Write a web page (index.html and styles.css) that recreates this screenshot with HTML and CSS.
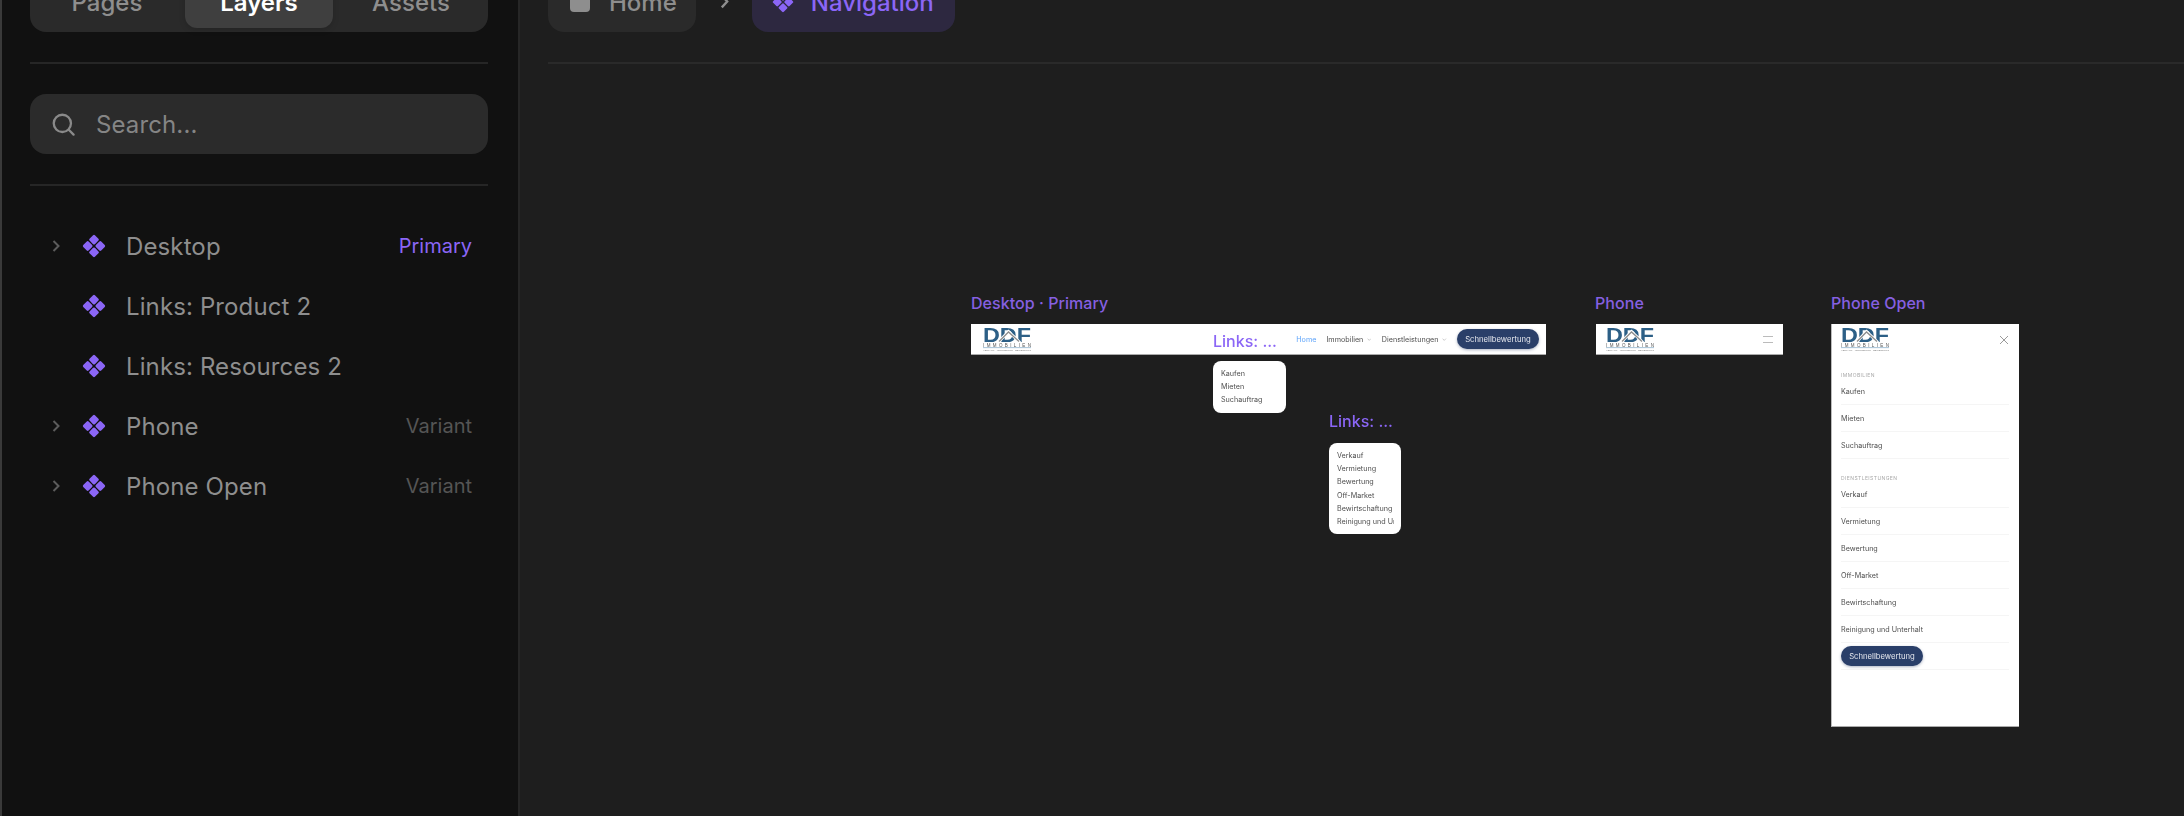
FILE: index.html
```html
<!DOCTYPE html>
<html lang="de">
<head>
<meta charset="utf-8">
<title>Navigation</title>
<link rel="stylesheet" href="styles.css">
</head>
<body>
<svg class="defs" width="0" height="0" aria-hidden="true">
  <symbol id="cmp" viewBox="0 0 24 24">
    <g fill="#8b66f6">
      <rect x="8.200" y="1.900" width="7.600" height="7.600" rx="1.300" transform="rotate(45 12 5.700)"/>
      <rect x="1.900" y="8.200" width="7.600" height="7.600" rx="1.300" transform="rotate(45 5.700 12)"/>
      <rect x="14.500" y="8.200" width="7.600" height="7.600" rx="1.300" transform="rotate(45 18.300 12)"/>
      <rect x="8.200" y="14.500" width="7.600" height="7.600" rx="1.300" transform="rotate(45 12 18.300)"/>
    </g>
  </symbol>
  <symbol id="logo" viewBox="0 0 48 25">
    <text x="0" y="15" font-family="Liberation Sans" font-weight="700" font-size="20" textLength="48" lengthAdjust="spacingAndGlyphs" fill="#2c5f86">DDF</text>
    <path d="M15 15.500 25.500 4.500 37 15.500" fill="none" stroke="#fff" stroke-width="3"/>
    <path d="M16 14.500 25.500 5 36 14.500" fill="none" stroke="#8d8d8d" stroke-width="1.300"/>
    <text x="0" y="19.500" font-family="Liberation Sans" font-size="4.500" textLength="48" fill="#555">IMMOBILIEN</text>
    <rect x="0" y="20.300" width="48" height=".8" fill="#8fb2cc"/>
    <text x="0" y="24" font-family="Liberation Sans" font-size="2.400" textLength="48" fill="#777">VERKAUF · VERMIETUNG · BEWERTUNG</text>
  </symbol>
</svg>
<div class="app">
  <aside class="sidebar">
    <div class="tabs">
      <span class="tab">Pages</span>
      <span class="tab tab-active">Layers</span>
      <span class="tab">Assets</span>
    </div>
    <div class="rule rule-a"></div>
    <div class="search">
      <svg class="search-icon" viewBox="0 0 24 24" fill="none" stroke="#8a8a8a" stroke-width="2.400" stroke-linecap="round"><circle cx="10.800" cy="10.800" r="9"/><path d="M17.500 17.500 22.500 22.500"/></svg>
      <span>Search...</span>
    </div>
    <div class="rule rule-b"></div>
    <ul class="layers">
      <li class="layer">
        <svg class="chev" viewBox="0 0 8 12" fill="none" stroke="#5c5c5c" stroke-width="2"><path d="M1.500 1 6.500 6 1.500 11"/></svg>
        <svg class="cmp"><use href="#cmp"/></svg>
        <span class="layer-name">Desktop</span>
        <span class="tag tag-primary">Primary</span>
      </li>
      <li class="layer">
        <span class="chev"></span>
        <svg class="cmp"><use href="#cmp"/></svg>
        <span class="layer-name">Links: Product 2</span>
      </li>
      <li class="layer">
        <span class="chev"></span>
        <svg class="cmp"><use href="#cmp"/></svg>
        <span class="layer-name">Links: Resources 2</span>
      </li>
      <li class="layer">
        <svg class="chev" viewBox="0 0 8 12" fill="none" stroke="#5c5c5c" stroke-width="2"><path d="M1.500 1 6.500 6 1.500 11"/></svg>
        <svg class="cmp"><use href="#cmp"/></svg>
        <span class="layer-name">Phone</span>
        <span class="tag">Variant</span>
      </li>
      <li class="layer">
        <svg class="chev" viewBox="0 0 8 12" fill="none" stroke="#5c5c5c" stroke-width="2"><path d="M1.500 1 6.500 6 1.500 11"/></svg>
        <svg class="cmp"><use href="#cmp"/></svg>
        <span class="layer-name">Phone Open</span>
        <span class="tag">Variant</span>
      </li>
    </ul>
  </aside>
  <main class="main">
    <header class="crumbs">
      <div class="crumb">
        <span class="home-icon"></span>
        <span>Home</span>
      </div>
      <svg class="crumb-sep" viewBox="0 0 10 16" fill="none" stroke="#8e8e8e" stroke-width="2.600"><path d="M2 1.500 8 8 2 14.500"/></svg>
      <div class="crumb crumb-active">
        <svg class="crumb-cmp"><use href="#cmp"/></svg>
        <span>Navigation</span>
      </div>
    </header>
    <section class="canvas">
      <div class="label label-desktop">Desktop · Primary</div>
      <div class="frame frame-desktop">
        <svg class="logo"><use href="#logo"/></svg>
        <nav class="nav">
          <span class="nav-home">Home</span>
          <span class="nav-item">Immobilien <svg class="mini" viewBox="0 0 8 5" fill="none" stroke="#999" stroke-width=".9"><path d="M1 1 4 4 7 1"/></svg></span>
          <span class="nav-item">Dienstleistungen <svg class="mini" viewBox="0 0 8 5" fill="none" stroke="#999" stroke-width=".9"><path d="M1 1 4 4 7 1"/></svg></span>
          <span class="cta">Schnellbewertung</span>
        </nav>
      </div>

      <div class="drop-label drop-label-a">Links: ...</div>
      <div class="drop drop-a">
        <span>Kaufen</span><span>Mieten</span><span>Suchauftrag</span>
      </div>
      <div class="drop-label drop-label-b">Links: ...</div>
      <div class="drop drop-b">
        <span>Verkauf</span><span>Vermietung</span><span>Bewertung</span><span>Off-Market</span><span>Bewirtschaftung</span><span>Reinigung und Unterhalt</span>
      </div>

      <div class="label label-phone">Phone</div>
      <div class="frame frame-phone">
        <svg class="logo"><use href="#logo"/></svg>
        <span class="burger"></span>
      </div>

      <div class="label label-open">Phone Open</div>
      <div class="frame frame-open">
        <div class="open-head">
          <svg class="logo"><use href="#logo"/></svg>
          <svg class="close" viewBox="0 0 10 10" fill="none" stroke="#9a9a9a" stroke-width="1"><path d="M1 1 9 9M9 1 1 9"/></svg>
        </div>
        <div class="group-title">IMMOBILIEN</div>
        <div class="m-row">Kaufen</div>
        <div class="m-row">Mieten</div>
        <div class="m-row">Suchauftrag</div>
        <div class="group-title group-second">DIENSTLEISTUNGEN</div>
        <div class="m-row">Verkauf</div>
        <div class="m-row">Vermietung</div>
        <div class="m-row">Bewertung</div>
        <div class="m-row">Off-Market</div>
        <div class="m-row">Bewirtschaftung</div>
        <div class="m-row">Reinigung und Unterhalt</div>
        <div class="m-row"><span class="cta">Schnellbewertung</span></div>
      </div>
    </section>
  </main>
</div>
</body>
</html>
```
FILE: styles.css
```css
* { box-sizing: border-box; }
html, body { margin: 0; height: 100%; overflow: hidden; background: #1e1e1e; }
body { font-family: Inter, "Liberation Sans", sans-serif; }
.defs { position: absolute; }

.app { display: flex; height: 844px; margin-top: -28px; }

.sidebar {
  width: 520px;
  flex: none;
  background: #111;
  border-left: 2px solid #3a3a3a;
  border-right: 2px solid #262626;
  padding: 0 30px 0 28px;
  display: flex;
  flex-direction: column;
}
.tabs {
  height: 60px;
  background: #2a2a2a;
  border-radius: 16px;
  padding: 4px 3px;
  display: flex;
  align-items: stretch;
  gap: 4px;
  flex: none;
}
.tab {
  flex: 1;
  display: flex;
  align-items: center;
  justify-content: center;
  font-size: 24px;
  font-weight: 500;
  color: #8e8e8e;
  border-radius: 12px;
}
.tab-active { background: #3f3f3f; color: #fff; font-weight: 600; box-shadow: 0 2px 6px rgba(0,0,0,.15); }
.rule { height: 2px; background: #262626; flex: none; }
.rule-a { margin-top: 30px; }
.search {
  height: 60px;
  margin-top: 30px;
  background: #2b2b2b;
  border-radius: 16px;
  display: flex;
  align-items: center;
  padding-left: 22px;
  gap: 21px;
  font-size: 24px;
  letter-spacing: .12px;
  color: #858585;
  flex: none;
}
.search-icon { width: 23px; height: 23px; flex: none; }
.rule-b { margin-top: 30px; }
.layers { list-style: none; margin: 30px 0 0; padding: 0 16px 0 22px; }
.layer { height: 60px; display: flex; align-items: center; font-size: 24px; letter-spacing: .12px; color: #8e8e8e; }
.chev { width: 8px; height: 12px; flex: none; margin-right: 22px; }
.cmp { width: 24px; height: 24px; flex: none; margin-right: 20px; }
.layer-name { flex: 1; }
.tag { font-size: 20px; letter-spacing: 0; color: #555; }
.tag-primary { color: #8b66f6; }

.main { flex: 1; min-width: 0; display: flex; flex-direction: column; }
.crumbs {
  height: 92px;
  flex: none;
  margin-left: 28px;
  border-bottom: 2px solid #2a2a2a;
  display: flex;
  align-items: flex-start;
  font-size: 24px;
  font-weight: 500;
  color: #8e8e8e;
}
.crumb {
  height: 60px;
  padding: 0 19px 0 22px;
  display: flex;
  align-items: center;
  gap: 19px;
  background: #2a2a2a;
  border-radius: 16px;
}
.crumb-active { background: #2d2840; color: #8b66f6; padding: 0 21px 0 20px; gap: 17px; }
.home-icon { width: 20px; height: 20px; background: #8e8e8e; border-radius: 4px; flex: none; }
.crumb-cmp { width: 22px; height: 22px; flex: none; }
.crumb-sep { width: 9px; height: 15px; margin: 22px 23px 0 24px; flex: none; }

.canvas { flex: 1; position: relative; overflow: hidden; }

.label { position: absolute; top: 230px; font-size: 16px; font-weight: 500; line-height: 18px; letter-spacing: .05px; color: #8660e2; white-space: nowrap; }
.label-desktop { left: 451px; }
.label-phone { left: 1075px; }
.label-open { left: 1311px; }

.frame { position: absolute; top: 260px; background: #fff; border-bottom: 1px solid #aaa; display: flex; align-items: center; filter: blur(.4px); }
.frame-desktop { left: 451px; width: 575px; height: 31px; padding: 0 7px 0 12px; }
.frame-phone { left: 1076px; width: 187px; height: 31px; padding: 0 10px; justify-content: space-between; }
.frame-open { left: 1311px; width: 188px; height: 403px; padding: 0 10px 0 9px; flex-direction: column; align-items: stretch; border-left: 1px solid #bbb; }

.logo { width: 48px; height: 25px; flex: none; }
.nav { margin-left: auto; display: flex; align-items: center; font-size: 7.200px; color: #4f4f4f; }
.nav-home { color: #60a5fa; margin-right: 10px; }
.nav-item { margin-right: 10.500px; white-space: nowrap; display: flex; align-items: center; gap: 3.500px; }
.mini { width: 4.500px; height: 3px; }
.cta {
  display: inline-flex;
  align-items: center;
  justify-content: center;
  width: 82px;
  height: 20px;
  border-radius: 10px;
  background: #2a3f69;
  color: #e6e8ee;
  font-size: 7.700px;
  box-shadow: 0 1px 3px rgba(42,63,105,.4);
}
.burger { width: 10px; height: 7px; border-top: 1px solid #bbb; border-bottom: 1px solid #bbb; }

.open-head { height: 31px; flex: none; display: flex; align-items: center; justify-content: space-between; }
.close { width: 10px; height: 10px; }
.group-title { font-size: 5px; letter-spacing: .42px; color: #a8a8a8; margin-top: 17px; line-height: 6px; flex: none; }
.group-second { margin-top: 16px; }
.m-row { height: 27px; flex: none; display: flex; align-items: center; font-size: 7.200px; color: #4f4f4f; border-bottom: 1px solid #f5f5f5; }

.drop-label { position: absolute; font-size: 16px; font-weight: 500; line-height: 20px; color: #8b66f6; filter: blur(.3px); }
.drop-label-a { left: 693px; top: 267px; }
.drop-label-b { left: 809px; top: 347px; }
.drop {
  position: absolute;
  background: #fff;
  border-radius: 8px;
  padding: 6px 7px 0 8px;
  display: flex;
  flex-direction: column;
  font-size: 7.200px;
  color: #4f4f4f;
  overflow: hidden;
  white-space: nowrap;
  filter: blur(.4px);
}
.drop span { height: 13.200px; line-height: 13.200px; display: block; overflow: hidden; flex: none; }
.drop-a { left: 693px; top: 297px; width: 73px; height: 52px; }
.drop-b { left: 809px; top: 379px; width: 72px; height: 91px; }
```
